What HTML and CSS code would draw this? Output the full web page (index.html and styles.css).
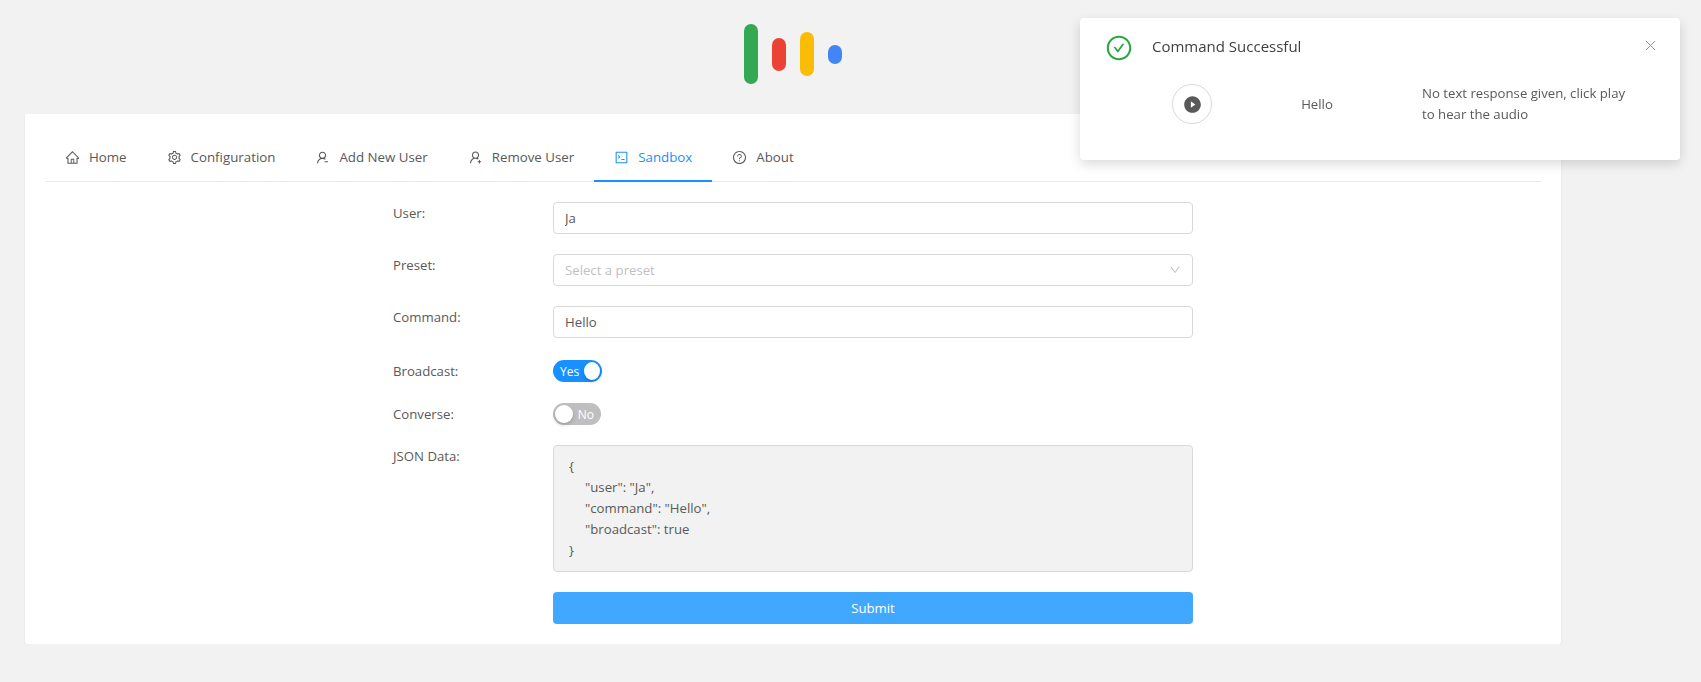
FILE: index.html
```html
<!DOCTYPE html>
<html lang="en">
<head>
    <meta charset="UTF-8">
    <meta name="viewport" content="width=device-width, initial-scale=1.0">
    <title>Sandbox</title>
    <link rel="stylesheet" href="styles.css">
</head>
<body>
    <header class="logo-bar">
        <div class="logo">
            <span class="logo-dot green"></span>
            <span class="logo-dot red"></span>
            <span class="logo-dot yellow"></span>
            <span class="logo-dot blue"></span>
        </div>
    </header>

    <main class="card">
        <nav class="tabs">
            <a class="tab">
                <svg class="icon" viewBox="0 0 1024 1024"><path d="M946.5 505L560.1 118.8l-25.9-25.9a31.5 31.5 0 0 0-44.4 0L77.5 505a63.9 63.9 0 0 0-18.8 46c.4 35.2 29.7 63.3 64.9 63.3h42.5V940h691.8V614.3h43.4c17.1 0 33.2-6.7 45.3-18.8a63.6 63.6 0 0 0 18.7-45.3c0-17-6.7-33.1-18.8-45.2zM568 868H456V664h112v204zm217.9-325.7V868H632V640c0-22.1-17.9-40-40-40H432c-22.1 0-40 17.9-40 40v228H238.1V542.3h-96l370-369.7 23.1 23.1L882 542.3h-96.1z"/></svg>
                Home
            </a>
            <a class="tab">
                <svg class="icon" viewBox="0 0 1024 1024"><path d="M924.8 625.7l-65.5-56c3.1-19 4.7-38.4 4.7-57.8s-1.6-38.8-4.7-57.8l65.5-56a32.03 32.03 0 0 0 9.3-35.2l-.9-2.6a443.74 443.74 0 0 0-79.7-137.9l-1.8-2.1a32.12 32.12 0 0 0-35.1-9.5l-81.3 28.9c-30-24.6-63.5-44-99.7-57.6l-15.7-85a32.05 32.05 0 0 0-25.8-25.7l-2.7-.5c-52.1-9.4-106.9-9.4-159 0l-2.7.5a32.05 32.05 0 0 0-25.8 25.7l-15.8 85.4a351.86 351.86 0 0 0-99 57.4l-81.9-29.1a32 32 0 0 0-35.1 9.5l-1.8 2.1a446.02 446.02 0 0 0-79.7 137.9l-.9 2.6c-4.5 12.5-.8 26.5 9.3 35.2l66.3 56.6c-3.1 18.8-4.6 38-4.6 57.1 0 19.2 1.5 38.4 4.6 57.1L99 625.5a32.03 32.03 0 0 0-9.3 35.2l.9 2.6c18.1 50.4 44.9 96.9 79.7 137.9l1.8 2.1a32.12 32.12 0 0 0 35.1 9.5l81.9-29.1c29.8 24.5 63.1 43.9 99 57.4l15.8 85.4a32.05 32.05 0 0 0 25.8 25.7l2.7.5a449.4 449.4 0 0 0 159 0l2.7-.5a32.05 32.05 0 0 0 25.8-25.7l15.7-85a350 350 0 0 0 99.7-57.6l81.3 28.9a32 32 0 0 0 35.1-9.5l1.8-2.1c34.8-41.1 61.6-87.5 79.7-137.9l.9-2.6c4.5-12.3.8-26.3-9.3-35zM788.3 465.9c2.5 15.1 3.8 30.6 3.8 46.1s-1.3 31-3.8 46.1l-6.6 40.1 74.7 63.9a370.03 370.03 0 0 1-42.6 73.6L721 702.8l-31.4 25.8c-23.9 19.6-50.5 35-79.3 45.8l-38.1 14.3-17.9 97a377.5 377.5 0 0 1-85 0l-17.9-97.2-37.8-14.5c-28.5-10.8-55-26.2-78.7-45.7l-31.4-25.9-93.4 33.2c-17-22.9-31.2-47.6-42.6-73.6l75.5-64.5-6.5-40c-2.4-14.9-3.7-30.3-3.7-45.5 0-15.3 1.2-30.6 3.7-45.5l6.5-40-75.5-64.5c11.3-26.1 25.6-50.7 42.6-73.6l93.4 33.2 31.4-25.9c23.7-19.5 50.2-34.9 78.7-45.7l37.9-14.3 17.9-97.2c28.1-3.2 56.8-3.2 85 0l17.9 97 38.1 14.3c28.7 10.8 55.4 26.2 79.3 45.8l31.4 25.8 92.8-32.9c17 22.9 31.2 47.6 42.6 73.6L781.8 426l6.5 39.9zM512 326c-97.2 0-176 78.8-176 176s78.8 176 176 176 176-78.8 176-176-78.8-176-176-176zm79.2 255.2A111.6 111.6 0 0 1 512 614c-29.9 0-58-11.7-79.2-32.8A111.6 111.6 0 0 1 400 502c0-29.9 11.7-58 32.8-79.2C454 401.6 482.1 390 512 390c29.9 0 58 11.6 79.2 32.8A111.6 111.6 0 0 1 624 502c0 29.9-11.7 58-32.8 79.2z"/></svg>
                Configuration
            </a>
            <a class="tab">
                <svg class="icon" viewBox="0 0 1024 1024"><path d="M678.3 655.4c24.2-13 51.9-20.4 81.4-20.4h.1c3 0 4.4-3.6 2.2-5.6a371.67 371.67 0 0 0-103.7-65.8c-.4-.2-.8-.3-1.2-.5C719.2 518 760.6 444.7 760.6 362c0-137-110.8-248-247.5-248S265.7 225 265.7 362c0 82.7 41.4 156 104.4 201.1-.4.2-.8.3-1.2.5-45.2 19.1-85.8 46.5-120.7 81.5a373.1 373.1 0 0 0-80.4 119.5A373.6 373.6 0 0 0 138 901.8a8 8 0 0 0 8 8.2h59.9c4.3 0 7.9-3.5 8-7.8 2-77.2 32.9-149.5 87.6-204.3C358 641.2 433 610 513.1 610c56.8 0 111.3 15.7 158.3 45.1a8.1 8.1 0 0 0 6.9.3zM513.1 534c-45.8 0-88.9-17.9-121.4-50.4A171.2 171.2 0 0 1 341.3 362c0-45.9 17.9-89.1 50.4-121.6S467.2 190 513.1 190s88.9 17.9 121.4 50.4A171.2 171.2 0 0 1 685 362c0 45.9-17.9 89.1-50.5 121.6C601.9 516.1 558.9 534 513.1 534zM878 766H662c-4.4 0-8 3.6-8 8v48c0 4.4 3.6 8 8 8h216c4.4 0 8-3.6 8-8v-48c0-4.4-3.6-8-8-8z"/></svg>
                Add New User
            </a>
            <a class="tab">
                <svg class="icon" viewBox="0 0 1024 1024"><path d="M678.3 642.4c24.2-13 51.9-20.4 81.4-20.4h.1c3 0 4.4-3.6 2.2-5.6a371.67 371.67 0 0 0-103.7-65.8c-.4-.2-.8-.3-1.2-.5C719.2 505 760.6 431.7 760.6 349c0-137-110.8-248-247.5-248S265.7 212 265.7 349c0 82.7 41.4 156 104.4 201.1-.4.2-.8.3-1.2.5-45.2 19.1-85.8 46.5-120.7 81.5a373.1 373.1 0 0 0-80.4 119.5A373.6 373.6 0 0 0 138 888.8a8 8 0 0 0 8 8.2h59.9c4.3 0 7.9-3.5 8-7.8 2-77.2 32.9-149.5 87.6-204.3C358 628.2 433 597 513.1 597c56.8 0 111.3 15.7 158.3 45.1a8.1 8.1 0 0 0 6.9.3zM513.1 521c-45.8 0-88.9-17.9-121.4-50.4A171.2 171.2 0 0 1 341.3 349c0-45.9 17.9-89.1 50.4-121.6S467.2 177 513.1 177s88.9 17.9 121.4 50.4A171.2 171.2 0 0 1 685 349c0 45.9-17.9 89.1-50.5 121.6C601.9 503.1 558.9 521 513.1 521zM892 772h-80v-80c0-4.4-3.6-8-8-8h-48c-4.4 0-8 3.6-8 8v80h-80c-4.4 0-8 3.6-8 8v48c0 4.4 3.6 8 8 8h80v80c0 4.4 3.6 8 8 8h48c4.4 0 8-3.6 8-8v-80h80c4.4 0 8-3.6 8-8v-48c0-4.4-3.6-8-8-8z"/></svg>
                Remove User
            </a>
            <a class="tab active">
                <svg class="icon" viewBox="0 0 1024 1024"><path d="M880 112H144c-17.7 0-32 14.3-32 32v736c0 17.7 14.3 32 32 32h736c17.7 0 32-14.3 32-32V144c0-17.7-14.3-32-32-32zm-40 728H184V184h656v656z"/><path d="M300 340l150 130-150 130-40-46 98-84-98-84zM500 620h220v60H500z"/></svg>
                Sandbox
            </a>
            <a class="tab">
                <svg class="icon" viewBox="0 0 1024 1024"><path d="M512 64C264.6 64 64 264.6 64 512s200.6 448 448 448 448-200.6 448-448S759.4 64 512 64zm0 820c-205.4 0-372-166.6-372-372s166.6-372 372-372 372 166.6 372 372-166.6 372-372 372z"/><path d="M623.6 316.7C593.6 290.4 554 276 512 276s-81.6 14.5-111.6 40.7C369.2 344 352 380.7 352 420v7.6c0 4.4 3.6 8 8 8h48c4.4 0 8-3.6 8-8V420c0-44.1 43.1-80 96-80s96 35.9 96 80c0 31.1-22 59.6-56.1 72.7-21.2 8.1-39.2 22.3-52.1 40.9-13.1 19-19.9 41.8-19.9 64.9V620c0 4.4 3.6 8 8 8h48c4.4 0 8-3.6 8-8v-22.7a48.3 48.3 0 0 1 30.9-44.8c59-22.7 97.1-74.7 97.1-132.5.1-39.3-17.1-76-48.3-103.3zM472 732a40 40 0 1 0 80 0 40 40 0 1 0-80 0z"/></svg>
                About
            </a>
        </nav>

        <form class="form">
            <div class="form-row">
                <label class="form-label">User:</label>
                <input class="text-input" type="text" value="Ja">
            </div>
            <div class="form-row">
                <label class="form-label">Preset:</label>
                <div class="select">
                    <span class="placeholder">Select a preset</span>
                    <svg class="select-arrow" viewBox="0 0 1024 1024"><path d="M884 256h-75c-5.1 0-9.9 2.5-12.9 6.6L512 654.2 227.9 262.6c-3-4.1-7.8-6.6-12.9-6.6h-75c-6.5 0-10.3 7.4-6.5 12.7l352.6 486.1c12.8 17.6 39 17.6 51.7 0l352.6-486.1c3.9-5.3.1-12.7-6.4-12.7z"/></svg>
                </div>
            </div>
            <div class="form-row command-row">
                <label class="form-label">Command:</label>
                <input class="text-input" type="text" value="Hello">
            </div>
            <div class="form-row broadcast-row">
                <label class="form-label">Broadcast:</label>
                <button type="button" class="switch on"><span class="switch-text">Yes</span><span class="switch-knob"></span></button>
            </div>
            <div class="form-row">
                <label class="form-label">Converse:</label>
                <button type="button" class="switch"><span class="switch-knob"></span><span class="switch-text">No</span></button>
            </div>
            <div class="form-row">
                <label class="form-label">JSON Data:</label>
                <pre class="json-box">{
	"user": "Ja",
	"command": "Hello",
	"broadcast": true
}</pre>
            </div>
            <div class="form-row submit-row">
                <span class="form-label"></span>
                <button type="button" class="submit">Submit</button>
            </div>
        </form>
    </main>

    <aside class="toast">
        <svg class="toast-icon" viewBox="0 0 1024 1024"><path d="M699 353h-46.9c-10.2 0-19.9 4.9-25.9 13.3L469 584.3l-71.2-98.8c-6-8.3-15.6-13.3-25.9-13.3H325c-6.5 0-10.3 7.4-6.5 12.7l124.6 172.8a31.8 31.8 0 0 0 51.7 0l210.6-292c3.9-5.3.1-12.7-6.4-12.7z"/><path d="M512 64C264.6 64 64 264.6 64 512s200.6 448 448 448 448-200.6 448-448S759.4 64 512 64zm0 820c-205.4 0-372-166.6-372-372s166.6-372 372-372 372 166.6 372 372-166.6 372-372 372z"/></svg>
        <div class="toast-body">
            <div class="toast-title">Command Successful</div>
            <div class="toast-grid">
                <div class="play-cell">
                    <button type="button" class="play">
                        <svg class="play-icon" viewBox="0 0 1024 1024"><path d="M512 64C264.6 64 64 264.6 64 512s200.6 448 448 448 448-200.6 448-448S759.4 64 512 64zm144.1 454.9L437.7 677.8a8.02 8.02 0 0 1-12.7-6.5V353.7a8 8 0 0 1 12.7-6.5L656.1 506a7.9 7.9 0 0 1 0 12.9z"/></svg>
                    </button>
                </div>
                <div class="toast-command">Hello</div>
                <div class="toast-text">No text response given, click play to hear the audio</div>
            </div>
        </div>
        <svg class="toast-close" viewBox="0 0 12 12"><path d="M1 1l10 10M11 1L1 11"/></svg>
    </aside>
</body>
</html>
```

FILE: styles.css
```css
* { box-sizing: border-box; }

body {
    margin: 0;
    background-color: #f2f2f2;
    font-family: "Open Sans", "Noto Sans", sans-serif;
    font-size: 13.2px;
    line-height: 21px;
    color: #595959;
}

.logo-bar {
    width: 1536px;
    height: 114px;
    margin-left: 25px;
    display: flex;
    justify-content: center;
    padding-top: 24px;
}
.logo { display: flex; align-items: center; gap: 14px; height: 60px; }
.logo-dot { width: 14px; border-radius: 7px; }
.green { height: 60px; background-color: #34a853; }
.red { height: 33px; background-color: #ea4335; }
.yellow { height: 44px; background-color: #fbbc05; }
.blue { height: 19px; background-color: #4285f4; }

.card {
    width: 1536px;
    height: 530px;
    margin-left: 25px;
    padding: 0 20px;
    background-color: #fff;
    border-radius: 2px;
    box-shadow: 0 1px 2px rgba(0, 0, 0, 0.1);
}

.tabs {
    display: flex;
    height: 68px;
    padding-top: 23px;
    border-bottom: 1px solid #e8e8e8;
}
.tab {
    display: flex;
    align-items: center;
    gap: 9px;
    height: 45px;
    padding: 0 20px 2px;
    margin-bottom: -1px;
    font-size: 13.3px;
    white-space: nowrap;
    border-bottom: 2px solid transparent;
}
.tab.active { color: #1890ff; border-bottom-color: #1890ff; }
.icon { width: 15px; height: 15px; fill: currentColor; flex: none; }

.form { width: 800px; margin: 20px auto 0; }
.form-row { display: flex; margin-bottom: 20px; }
.command-row { margin-bottom: 22px; }
.broadcast-row { margin-bottom: 21px; }
.submit-row { margin-bottom: 0; }
.form-label { width: 160px; flex: none; height: 22px; padding-top: 1px; }

.text-input, .select {
    width: 640px;
    height: 32px;
    padding: 0 11px;
    border: 1px solid #d9d9d9;
    border-radius: 4px;
    background-color: #fff;
    font: inherit;
    color: #595959;
    outline: none;
}
.select { display: flex; align-items: center; justify-content: space-between; }
.placeholder { color: #bfbfbf; }
.select-arrow { width: 12px; height: 12px; fill: #bfbfbf; }

.switch {
    display: flex;
    align-items: center;
    justify-content: space-between;
    width: 48px;
    height: 22px;
    padding: 0 2px;
    border: 0;
    border-radius: 11px;
    background-color: #bfbfbf;
    color: #fff;
    font: inherit;
    font-size: 12px;
}
.switch.on { width: 49px; background-color: #1890ff; }
.switch-text { padding: 0 5px; }
.switch-knob { width: 18px; height: 18px; border-radius: 50%; background-color: #fff; box-shadow: 0 2px 4px rgba(0, 35, 11, 0.2); }

.json-box {
    width: 640px;
    height: 127px;
    margin: 0;
    padding: 10px 15px 0;
    border: 1px solid #d9d9d9;
    border-radius: 4px;
    background-color: #f2f2f2;
    font: inherit;
    tab-size: 16px;
}

.submit {
    width: 640px;
    height: 32px;
    border: 0;
    border-radius: 4px;
    background-color: #40a9ff;
    color: #fff;
    font: inherit;
}

.toast {
    position: fixed;
    top: 18px;
    right: 21px;
    width: 600px;
    height: 142px;
    display: flex;
    padding: 16px 24px;
    background-color: #fff;
    border-radius: 4px;
    box-shadow: 0 4px 12px rgba(0, 0, 0, 0.15);
}
.toast-icon { width: 28px; height: 28px; margin-left: 1px; fill: #28a745; flex: none; }
.toast-body { margin-left: 19px; flex: 1; }
.toast-title { font-size: 15px; line-height: 24px; color: #404040; }
.toast-grid { display: grid; grid-template-columns: 80px 170px 1fr; align-items: center; margin-top: 25px; }
.play-cell { display: flex; justify-content: center; }
.play {
    display: flex;
    align-items: center;
    justify-content: center;
    width: 40px;
    height: 40px;
    padding: 0;
    border: 1px solid #d9d9d9;
    border-radius: 50%;
    background-color: #fff;
}
.play-icon { width: 19px; height: 19px; fill: #595959; }
.toast-command { text-align: center; }
.toast-text { margin-left: 20px; max-width: 216px; }
.toast-close { position: absolute; top: 22px; right: 24px; width: 11px; height: 11px; fill: none; stroke: #8c8c8c; stroke-width: 1; }
```
